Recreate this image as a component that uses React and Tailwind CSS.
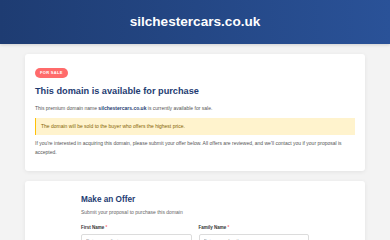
import React from 'react';

const font = { fontFamily: '"Liberation Sans", Arial, sans-serif' };

const Field = ({ label, placeholder }) => (
  <div className="flex flex-col">
    <label className="text-[4.5px] leading-[7px] font-bold text-[#333]">
      {label} <span className="text-[#ff6b6b]">*</span>
    </label>
    <input
      type="text"
      placeholder={placeholder}
      className="mt-[3px] h-[14px] w-full px-[4px] text-[5px] border border-[#dcdcdc] rounded-[2px] bg-white placeholder:text-[#aaa] outline-none"
    />
  </div>
);

export default function App() {
  return (
    <div className="min-h-[240px] bg-[#f3f3f3]" style={font}>
      {/* Header */}
      <header className="h-[44px] flex items-center justify-center bg-gradient-to-r from-[#1e3c72] to-[#2a5298] shadow-[0_1px_3px_rgba(0,0,0,0.15)]">
        <h1 className="text-[13.6px] font-bold text-white">silchestercars.co.uk</h1>
      </header>

      <main className="px-[25px] pt-[10px] flex flex-col gap-[10px]">
        {/* Sale card */}
        <section className="bg-white rounded-[3px] shadow-[0_1px_4px_rgba(0,0,0,0.07)] px-[10px] pt-[14px] pb-[14px]">
          <div className="flex">
            <span className="flex items-center h-[10px] px-[5px] rounded-full bg-[#ff6b6b] text-white text-[4px] font-bold tracking-[0.3px] uppercase">
              For Sale
            </span>
          </div>
          <h2 className="mt-[8px] text-[9.2px] leading-[11px] font-bold text-[#1e3c72]">
            This domain is available for purchase
          </h2>
          <p className="mt-[7px] text-[5px] leading-[9px] text-[#555]">
            This premium domain name <strong className="text-[#1e3c72]">silchestercars.co.uk</strong> is currently available for sale.
          </p>
          <div className="mt-[5px] h-[17px] flex items-center bg-[#fff3cd] border-l-[1.5px] border-[#ffc107] pl-[5px] text-[5px] text-[#856404]">
            The domain will be sold to the buyer who offers the highest price.
          </div>
          <p className="mt-[4px] text-[5px] leading-[9px] text-[#555]">
            If you're interested in acquiring this domain, please submit your offer below. All offers are reviewed, and we'll contact you if your proposal is accepted.
          </p>
        </section>

        {/* Offer card */}
        <section className="bg-white rounded-[3px] shadow-[0_1px_4px_rgba(0,0,0,0.07)] pt-[14px] pb-[14px]">
          <div className="w-[228px] mx-auto">
            <h2 className="text-[8.2px] leading-[10px] font-bold text-[#1e3c72]">Make an Offer</h2>
            <p className="mt-[3px] text-[5px] leading-[9px] text-[#666]">
              Submit your proposal to purchase this domain
            </p>
            <div className="mt-[7px] grid grid-cols-2 gap-[7px]">
              <Field label="First Name" placeholder="Enter your first name" />
              <Field label="Family Name" placeholder="Enter your family name" />
            </div>
          </div>
        </section>
      </main>
    </div>
  );
}
